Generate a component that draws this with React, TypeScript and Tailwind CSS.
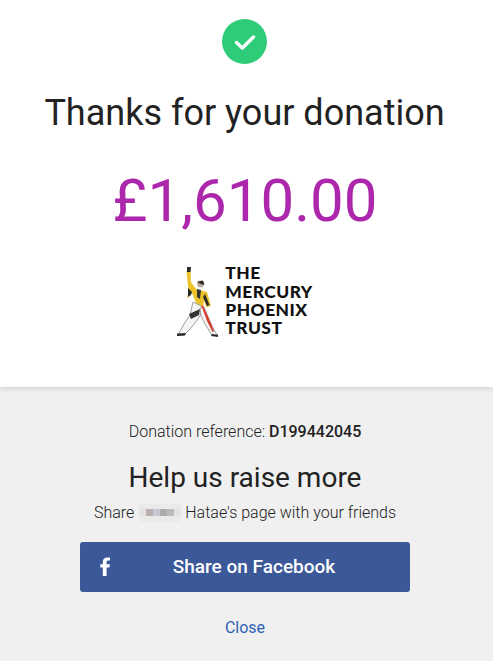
export default function App() {
  return (
    <div className="h-[661px] w-[493px] overflow-hidden bg-[#f0f0f0] font-['Roboto',sans-serif] text-[#222]">
      <section className="relative flex h-[387px] flex-col items-center bg-white pt-[19px] pr-[3px] shadow-[0_1px_6px_rgba(0,0,0,0.16)]">
        <div className="mr-[1px] flex h-[45px] w-[45px] items-center justify-center rounded-full bg-[#2ecc78]">
          <svg width="24" height="24" viewBox="0 0 24 24" fill="none">
            <path d="M3.5 12.5 L9.3 18 L20.5 7" stroke="#fff" strokeWidth="3.4" strokeLinecap="round" strokeLinejoin="round" />
          </svg>
        </div>
        <h1 className="mt-[24px] mr-[1px] text-[36px] leading-[50px] font-normal whitespace-nowrap text-[#222]">Thanks for your donation</h1>
        <div className="mt-[25px] text-[60px] leading-[75px] font-normal whitespace-nowrap text-[#ad27ad]">£1,610.00</div>
        <div className="mt-[26px] mr-[3px] flex h-[76px] items-center">
          <svg width="48" height="76" viewBox="0 0 48 76" className="mr-[3px]">
            <path d="M12.5 7 L16.5 7 L17 18 L22 25 L33 28 L37 42 L32 43 L30 36 L29 43 L22 39 L18 29 L13 35 L14.5 27 Z" fill="#ecc22a" />
            <path d="M13 3 L17 3 L16.5 8 L13 8 Z" fill="#2a2a2a" />
            <circle cx="26.5" cy="20" r="3.4" fill="#b9a79a" />
            <path d="M23 18 L29 16.5 L30.5 21 L27 20 Z" fill="#2a2a2a" />
            <path d="M14 24 L18 28 L17 31 L14 33 Z" fill="#2a2a2a" />
            <path d="M23 25 L27 26 L26 35 L23 33 Z" fill="#333" />
            <path d="M31 30 L35.5 41 L33 42 L29 33 Z" fill="#2a2a2a" />
            <path d="M19 38 L29 43 L27 50 L24 55 L17 64 L10 71 L4 71 L10 60 L16 51 Z" fill="#f5f5f5" stroke="#777" strokeWidth="0.7" />
            <path d="M15 50 L26 45 L25 51 L17 55 Z" fill="#333" />
            <path d="M26 44 L30 43 L35 55 L41 68 L44 71 L38 71 L31 60 L27 52 Z" fill="#f5f5f5" stroke="#777" strokeWidth="0.7" />
            <path d="M27.5 42 L29 41.5 L35 55 L40 67 L38.5 68 L33 57 Z" fill="#d8392c" />
            <path d="M3 69.5 L12 69 L11 71.5 L3 72 Z M38 70 L44 71 L44 73 L37 72 Z" fill="#2a2a2a" />
          </svg>
          <div className="-mt-[2px] font-['Lato',sans-serif] text-[17.4px] leading-[18.3px] font-black tracking-[0.45px] whitespace-nowrap text-[#111]">
            <div>THE</div>
            <div>MERCURY</div>
            <div>PHOENIX</div>
            <div>TRUST</div>
          </div>
        </div>
      </section>
      <section className="flex flex-col items-center pt-[35px] pr-[3px]">
        <p className="text-[16px] leading-[19px] font-light">
          Donation reference: <span className="font-medium">D199442045</span>
        </p>
        <h2 className="mt-[20px] text-[28px] leading-[33px] font-normal">Help us raise more</h2>
        <p className="mt-[9px] flex items-center text-[16px] leading-[20px] font-light">
          Share
          <svg width="42" height="20" viewBox="0 0 42 20" className="mr-[4px] ml-[5px]">
            <rect y="1" width="42" height="18" fill="#eaeaea" />
            <rect x="0" y="6" width="42" height="7" fill="#e2e2e2" />
            <rect x="7" y="6" width="7" height="7" fill="#b9b0ae" />
            <rect x="14" y="6" width="7" height="7" fill="#c4c9d2" />
            <rect x="21" y="6" width="7" height="7" fill="#aeaaaa" />
            <rect x="28" y="6" width="7" height="7" fill="#bdb9ba" />
          </svg>
          Hatae's page with your friends
        </p>
        <button className="relative mt-[19px] flex h-[50px] w-[330px] items-center justify-center rounded-[3px] bg-[#3b5998] pl-[18px] text-[19px] font-medium text-white">
          <svg width="11" height="19" viewBox="0 0 11 19" className="absolute top-[15px] left-[20px]" fill="#fff">
            <path d="M2.8 19 V10.5 H0.3 V7.3 H2.8 V5 C2.8 2 4.6 0.4 7.2 0.4 C8.4 0.4 9.6 0.5 10 0.6 V3.6 H8.2 C6.9 3.6 6.6 4.2 6.6 5.2 V7.3 H9.9 L9.4 10.5 H6.6 V19 Z" />
          </svg>
          Share on Facebook
        </button>
        <a className="mt-[26px] text-[16px] leading-[19px] font-normal text-[#2a62b5]">Close</a>
      </section>
    </div>
  );
}
